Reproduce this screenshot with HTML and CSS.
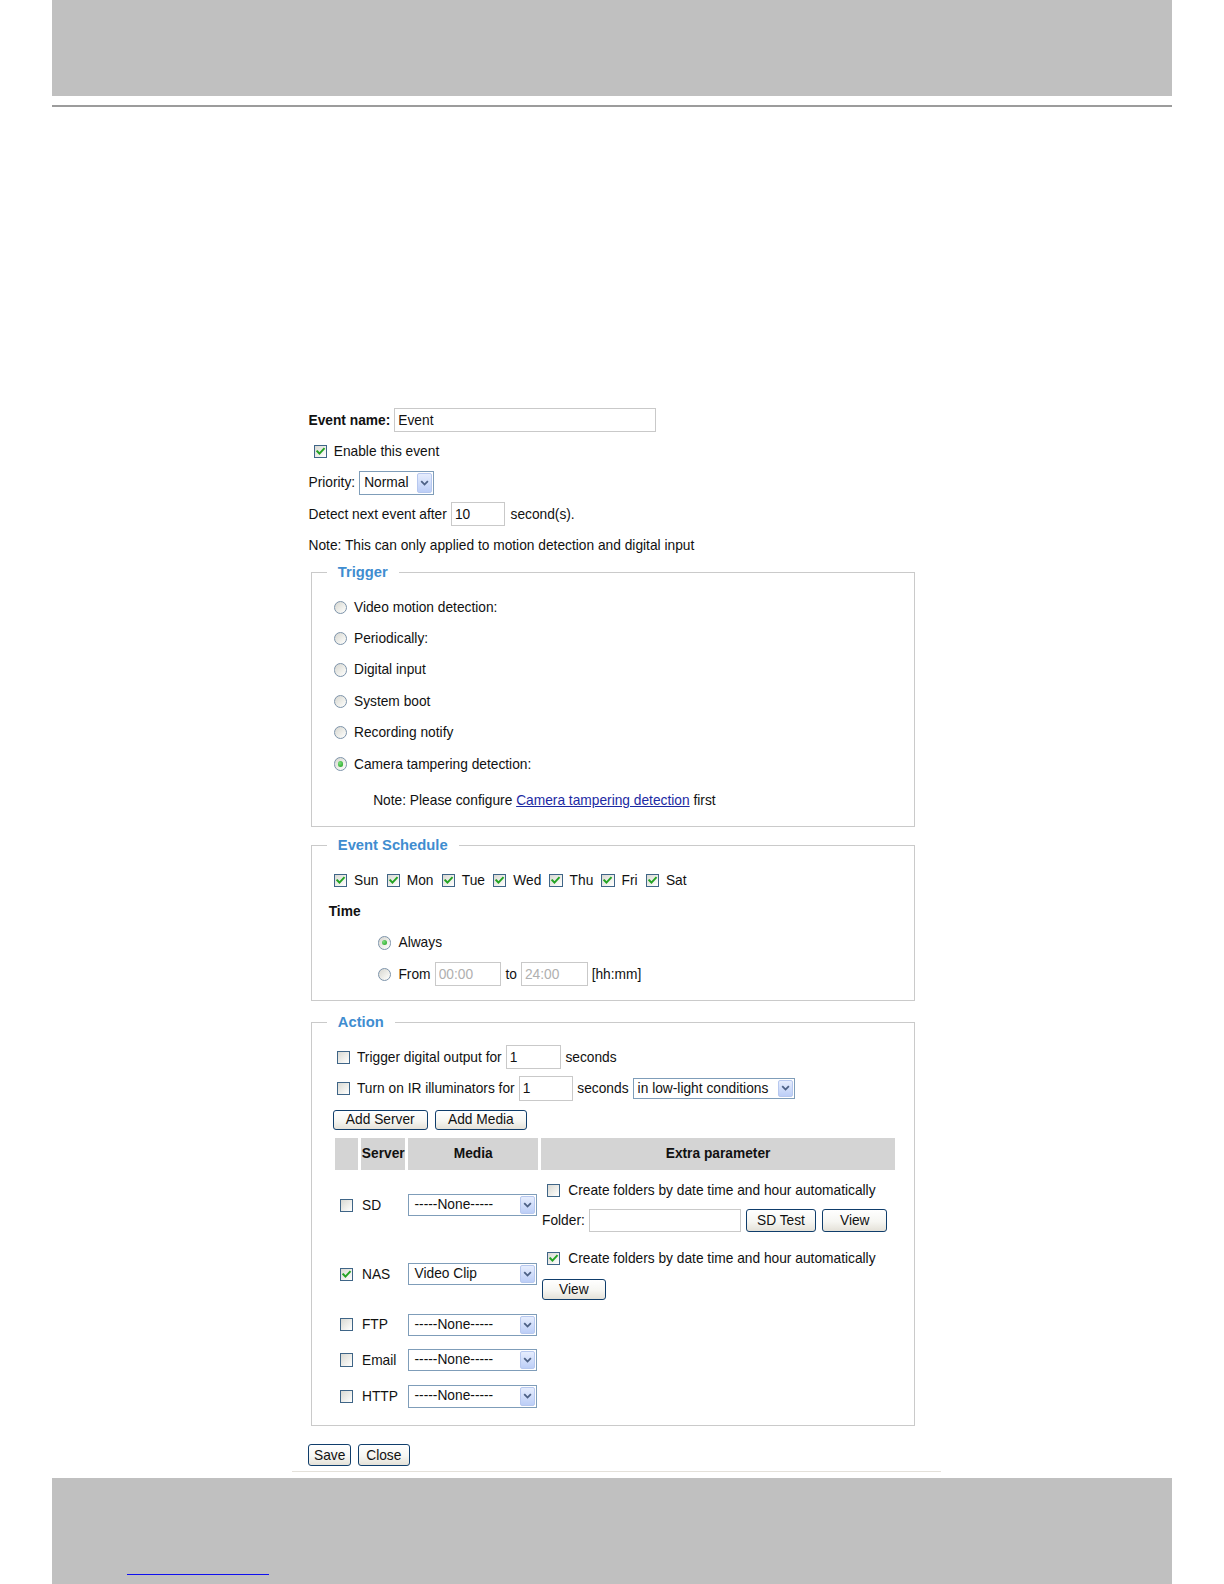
FILE: index.html
```html
<!DOCTYPE html>
<html>
<head>
<meta charset="UTF-8">
<title>Event settings</title>
<link rel="stylesheet" href="styles.css">
</head>
<body>
<div class="page">

<div class="topBand"></div>
<div class="topRule"></div>

<div class="sheet">
  <div class="form">

    <div class="row"><b>Event name:</b><input class="txt wName" value="Event"></div>
    <div class="row chk indent5"><span class="cb on"><svg viewBox="0 0 11 11"><path d="M2.2 5.2 L4.4 7.6 L8.8 2.8"/></svg></span>Enable this event</div>
    <div class="row">Priority:<span class="sel wPrio">Normal<span class="arr"><svg viewBox="0 0 9 6"><path d="M1.2 1.2 L4.5 4.5 L7.8 1.2"/></svg></span></span></div>
    <div class="row">Detect next event after<input class="txt wShort" value="10"><span class="after">second(s).</span></div>
    <div class="row">Note: This can only applied to motion detection and digital input</div>

    <fieldset class="box trigger">
      <legend>Trigger</legend>
      <div class="fsBody">
        <div class="row opt"><span class="rd"></span>Video motion detection:</div>
        <div class="row opt"><span class="rd"></span>Periodically:</div>
        <div class="row opt"><span class="rd"></span>Digital input</div>
        <div class="row opt"><span class="rd"></span>System boot</div>
        <div class="row opt"><span class="rd"></span>Recording notify</div>
        <div class="row opt"><span class="rd on"></span>Camera tampering detection:</div>
        <div class="row note">Note: Please configure&nbsp;<a href="#" class="cfgLink">Camera tampering detection</a>&nbsp;first</div>
      </div>
    </fieldset>

    <fieldset class="box schedule">
      <legend>Event Schedule</legend>
      <div class="fsBody">
        <div class="row days">
          <span class="day"><span class="cb on"><svg viewBox="0 0 11 11"><path d="M2.2 5.2 L4.4 7.6 L8.8 2.8"/></svg></span>Sun</span>
          <span class="day"><span class="cb on"><svg viewBox="0 0 11 11"><path d="M2.2 5.2 L4.4 7.6 L8.8 2.8"/></svg></span>Mon</span>
          <span class="day"><span class="cb on"><svg viewBox="0 0 11 11"><path d="M2.2 5.2 L4.4 7.6 L8.8 2.8"/></svg></span>Tue</span>
          <span class="day"><span class="cb on"><svg viewBox="0 0 11 11"><path d="M2.2 5.2 L4.4 7.6 L8.8 2.8"/></svg></span>Wed</span>
          <span class="day"><span class="cb on"><svg viewBox="0 0 11 11"><path d="M2.2 5.2 L4.4 7.6 L8.8 2.8"/></svg></span>Thu</span>
          <span class="day"><span class="cb on"><svg viewBox="0 0 11 11"><path d="M2.2 5.2 L4.4 7.6 L8.8 2.8"/></svg></span>Fri</span>
          <span class="day"><span class="cb on"><svg viewBox="0 0 11 11"><path d="M2.2 5.2 L4.4 7.6 L8.8 2.8"/></svg></span>Sat</span>
        </div>
        <div class="row timeHead"><b>Time</b></div>
        <div class="row opt timeOpt"><span class="rd on"></span>Always</div>
        <div class="row opt timeOpt"><span class="rd"></span><span class="fromRow">From<input class="txt wTime" value="00:00" disabled>to<input class="txt wTime" value="24:00" disabled>[hh:mm]</span></div>
      </div>
    </fieldset>

    <fieldset class="box action">
      <legend>Action</legend>
      <div class="fsBody">
        <div class="row chk act"><span class="cb"></span><span class="inl">Trigger digital output for<input class="txt wSec1" value="1">seconds</span></div>
        <div class="row chk act"><span class="cb"></span><span class="inl">Turn on IR illuminators for<input class="txt wSec2" value="1">seconds<span class="sel wLight">in low-light conditions<span class="arr"><svg viewBox="0 0 9 6"><path d="M1.2 1.2 L4.5 4.5 L7.8 1.2"/></svg></span></span></span></div>
        <div class="row btnRow"><button class="btn wAddS">Add Server</button><button class="btn wAddM">Add Media</button></div>

        <table class="srv">
          <colgroup><col class="c1"><col class="c2"><col class="c3"><col class="c4"></colgroup>
          <tr class="head"><th></th><th>Server</th><th>Media</th><th>Extra parameter</th></tr>
          <tr class="hSd">
            <td class="first"><span class="cb"></span></td>
            <td class="name">SD</td>
            <td><span class="sel wMedia">-----None-----<span class="arr"><svg viewBox="0 0 9 6"><path d="M1.2 1.2 L4.5 4.5 L7.8 1.2"/></svg></span></span></td>
            <td class="extra">
              <div class="xline chk"><span class="cb"></span>Create folders by date time and hour automatically</div>
              <div class="xline folder">Folder:<input class="txt wFolder"><button class="btn wTest">SD Test</button><button class="btn wView">View</button></div>
            </td>
          </tr>
          <tr class="hNas">
            <td class="first"><span class="cb on"><svg viewBox="0 0 11 11"><path d="M2.2 5.2 L4.4 7.6 L8.8 2.8"/></svg></span></td>
            <td class="name">NAS</td>
            <td><span class="sel wMedia">Video Clip<span class="arr"><svg viewBox="0 0 9 6"><path d="M1.2 1.2 L4.5 4.5 L7.8 1.2"/></svg></span></span></td>
            <td class="extra">
              <div class="xline nasLine chk"><span class="cb on"><svg viewBox="0 0 11 11"><path d="M2.2 5.2 L4.4 7.6 L8.8 2.8"/></svg></span>Create folders by date time and hour automatically</div>
              <div class="xline nasLine"><button class="btn wView2">View</button></div>
            </td>
          </tr>
          <tr class="hFtp">
            <td class="first"><span class="cb"></span></td>
            <td class="name">FTP</td>
            <td><span class="sel wMedia">-----None-----<span class="arr"><svg viewBox="0 0 9 6"><path d="M1.2 1.2 L4.5 4.5 L7.8 1.2"/></svg></span></span></td>
            <td></td>
          </tr>
          <tr class="hMail">
            <td class="first"><span class="cb"></span></td>
            <td class="name">Email</td>
            <td><span class="sel wMedia">-----None-----<span class="arr"><svg viewBox="0 0 9 6"><path d="M1.2 1.2 L4.5 4.5 L7.8 1.2"/></svg></span></span></td>
            <td></td>
          </tr>
          <tr class="hHttp">
            <td class="first"><span class="cb"></span></td>
            <td class="name">HTTP</td>
            <td><span class="sel wMedia">-----None-----<span class="arr"><svg viewBox="0 0 9 6"><path d="M1.2 1.2 L4.5 4.5 L7.8 1.2"/></svg></span></span></td>
            <td></td>
          </tr>
        </table>
      </div>
    </fieldset>

    <div class="saveRow"><button class="btn wSave">Save</button><button class="btn wClose">Close</button></div>
  </div>
  <div class="endRule"></div>
</div>

<div class="bottomBand"><a href="#" class="footLink"></a></div>

</div>
</body>
</html>
```

FILE: styles.css
```css
html, body { margin: 0; overflow: hidden; }
body  { font-family: "Liberation Sans", Arial, Helvetica, sans-serif; font-size: 13.6px; color: #111; background: #fff; }
table { font-size: inherit; }

.page { width: 1210px; height: 1566px; overflow: hidden; zoom: 1.0115; }

/* page bands */
.topBand    { margin: 0 51.5px; height: 95px; background: #c0c0c0; }
.topRule    { margin: 9px 51.5px 0; height: 2px; background: #9c9c9c; }
.bottomBand { margin: 6px 51.5px 0; height: 122px; box-sizing: border-box; padding: 95px 0 0 74px; background: #c0c0c0; }
.footLink   { display: block; width: 140px; height: 0; border-bottom: 1px solid #1010f0; }

.sheet   { margin: 294px 0 0 289px; width: 641px; }
.form    { padding-left: 16px; }
.endRule { margin-top: 5px; height: 1px; background: #e4e1da; }

/* rows */
.row      { display: flex; align-items: center; height: 31px; gap: 4px; white-space: nowrap; }
.row.chk  { gap: 7px; }
.indent5  { margin-left: 5px; }
.after    { margin-left: 1px; }
.inl      { display: flex; align-items: center; gap: 4px; }

/* text inputs */
.txt { font: inherit; color: #111; height: 24px; box-sizing: border-box; border: 1px solid #c9c9c9; padding: 0 3px; margin: 0; background: #fff; outline: none; }
.txt:disabled { color: #b0b0b0; background: #fff; }
.wName   { width: 259px; }
.wShort  { width: 54px; }
.wSec1   { width: 55px; }
.wSec2   { width: 54px; }
.wTime   { width: 66px; }
.wFolder { width: 150px; height: 23px; }

/* checkbox / radio */
.cb { display: inline-block; flex: none; width: 13px; height: 13px; box-sizing: border-box; border: 1px solid #3f6587; background: linear-gradient(135deg, #d9d9d3 0%, #f4f4f1 70%, #fff 100%); }
.cb svg { display: block; width: 11px; height: 11px; }
.cb svg path { fill: none; stroke: #22a322; stroke-width: 1.9; stroke-linecap: square; }

.rd { display: inline-flex; flex: none; align-items: center; justify-content: center; width: 13px; height: 13px; box-sizing: border-box; border: 1px solid #7d93aa; border-radius: 50%; background: linear-gradient(135deg, #d6d6d0 0%, #f2f2ee 65%, #fff 100%); }
.rd.on::after { content: ""; width: 5px; height: 5px; border-radius: 50%; background: radial-gradient(circle at 35% 35%, #7be07b, #1f9e1f); }

/* drop downs */
.sel { display: inline-flex; align-items: stretch; justify-content: space-between; box-sizing: border-box; height: 22px; border: 1px solid #7f9db9; background: #fff; padding-left: 4px; line-height: 20px; white-space: nowrap; }
.sel .arr { display: flex; align-items: center; justify-content: center; width: 15px; margin: 1px; box-sizing: border-box; border: 1px solid #b7c8ef; border-radius: 2px; background: linear-gradient(#e6edfd, #bccef7); }
.sel .arr svg { width: 9px; height: 6px; }
.sel .arr path { fill: none; stroke: #4d6185; stroke-width: 1.8; }
.wPrio  { width: 74px; height: 23px; line-height: 21px; }
.wLight { width: 161px; height: 21px; line-height: 19px; }
.wMedia { width: 127px; padding-left: 5px; }

/* buttons */
.btn { font: inherit; color: #111; margin: 0; padding: 0; box-sizing: border-box; height: 21px; border: 1px solid #0f3d6b; border-radius: 3px; background: linear-gradient(#ffffff 0%, #f6f6f2 55%, #e4e1d8 100%); }
.wAddS  { width: 94px; height: 20px; }
.wAddM  { width: 91px; height: 20px; }
.wTest  { width: 70px; height: 22px; }
.wView  { width: 64px; height: 22px; }
.wView2 { width: 63px; }
.wSave  { width: 42px; height: 22px; }
.wClose { width: 51px; height: 22px; }

/* fieldsets */
fieldset.box { margin: 0 0 0 2px; width: 598px; box-sizing: border-box; border: 1px solid #cacaca; padding: 10px 0; min-width: 0; }
fieldset.box legend { margin-left: 15px; padding: 0 11px; line-height: 18px; font-size: 14.6px; font-weight: bold; color: #3f8dd0; }
fieldset.trigger  { margin-top: 2px; }
fieldset.schedule { margin-top: 9px; }
fieldset.action   { margin-top: 12px; }
.fsBody           { padding-left: 22px; }
.action .fsBody   { padding-left: 20px; }

.opt       { gap: 7px; }
.note      { gap: 0; margin-top: 5px; margin-left: 39px; }
.cfgLink   { color: #1c2aa3; text-decoration: underline; }

.days      { gap: 0; }
.day       { display: flex; align-items: center; gap: 7px; margin-right: 8px; }
.timeHead  { margin-left: -5px; }
.timeOpt   { margin-left: 44px; }
.fromRow   { display: flex; align-items: center; gap: 4px; }

.act     { margin-left: 5px; }
.btnRow  { margin-left: 1px; gap: 7px; }

/* server table */
table.srv        { margin-top: 2px; border-collapse: separate; border-spacing: 3px 0; table-layout: fixed; width: 560px; }
table.srv col.c1 { width: 23px; }
table.srv col.c2 { width: 44px; }
table.srv col.c3 { width: 128px; }
table.srv col.c4 { width: 350px; }
table.srv th     { background: #d4d4d4; height: 32px; padding: 0; font-weight: bold; text-align: center; white-space: nowrap; }
table.srv td     { padding: 0; vertical-align: middle; white-space: nowrap; }
table.srv td.first { padding-left: 5px; }
table.srv td.first .cb { display: block; }
table.srv td.name  { padding-left: 1px; }
table.srv td.extra { padding-left: 1px; }
.hSd   td { height: 70px; }
.hNas  td { height: 66px; }
.hFtp  td { height: 34px; }
.hMail td { height: 36px; }
.hHttp td { height: 36px; }

.xline        { display: flex; align-items: center; height: 30px; gap: 4px; }
.xline.chk    { padding-left: 5px; gap: 8px; }
.xline.nasLine { height: 31px; }
.folder .btn  { margin-left: 1px; }
.folder .wView { margin-left: 2px; }

.saveRow { display: flex; gap: 7px; margin-top: 18px; height: 22px; }
```
